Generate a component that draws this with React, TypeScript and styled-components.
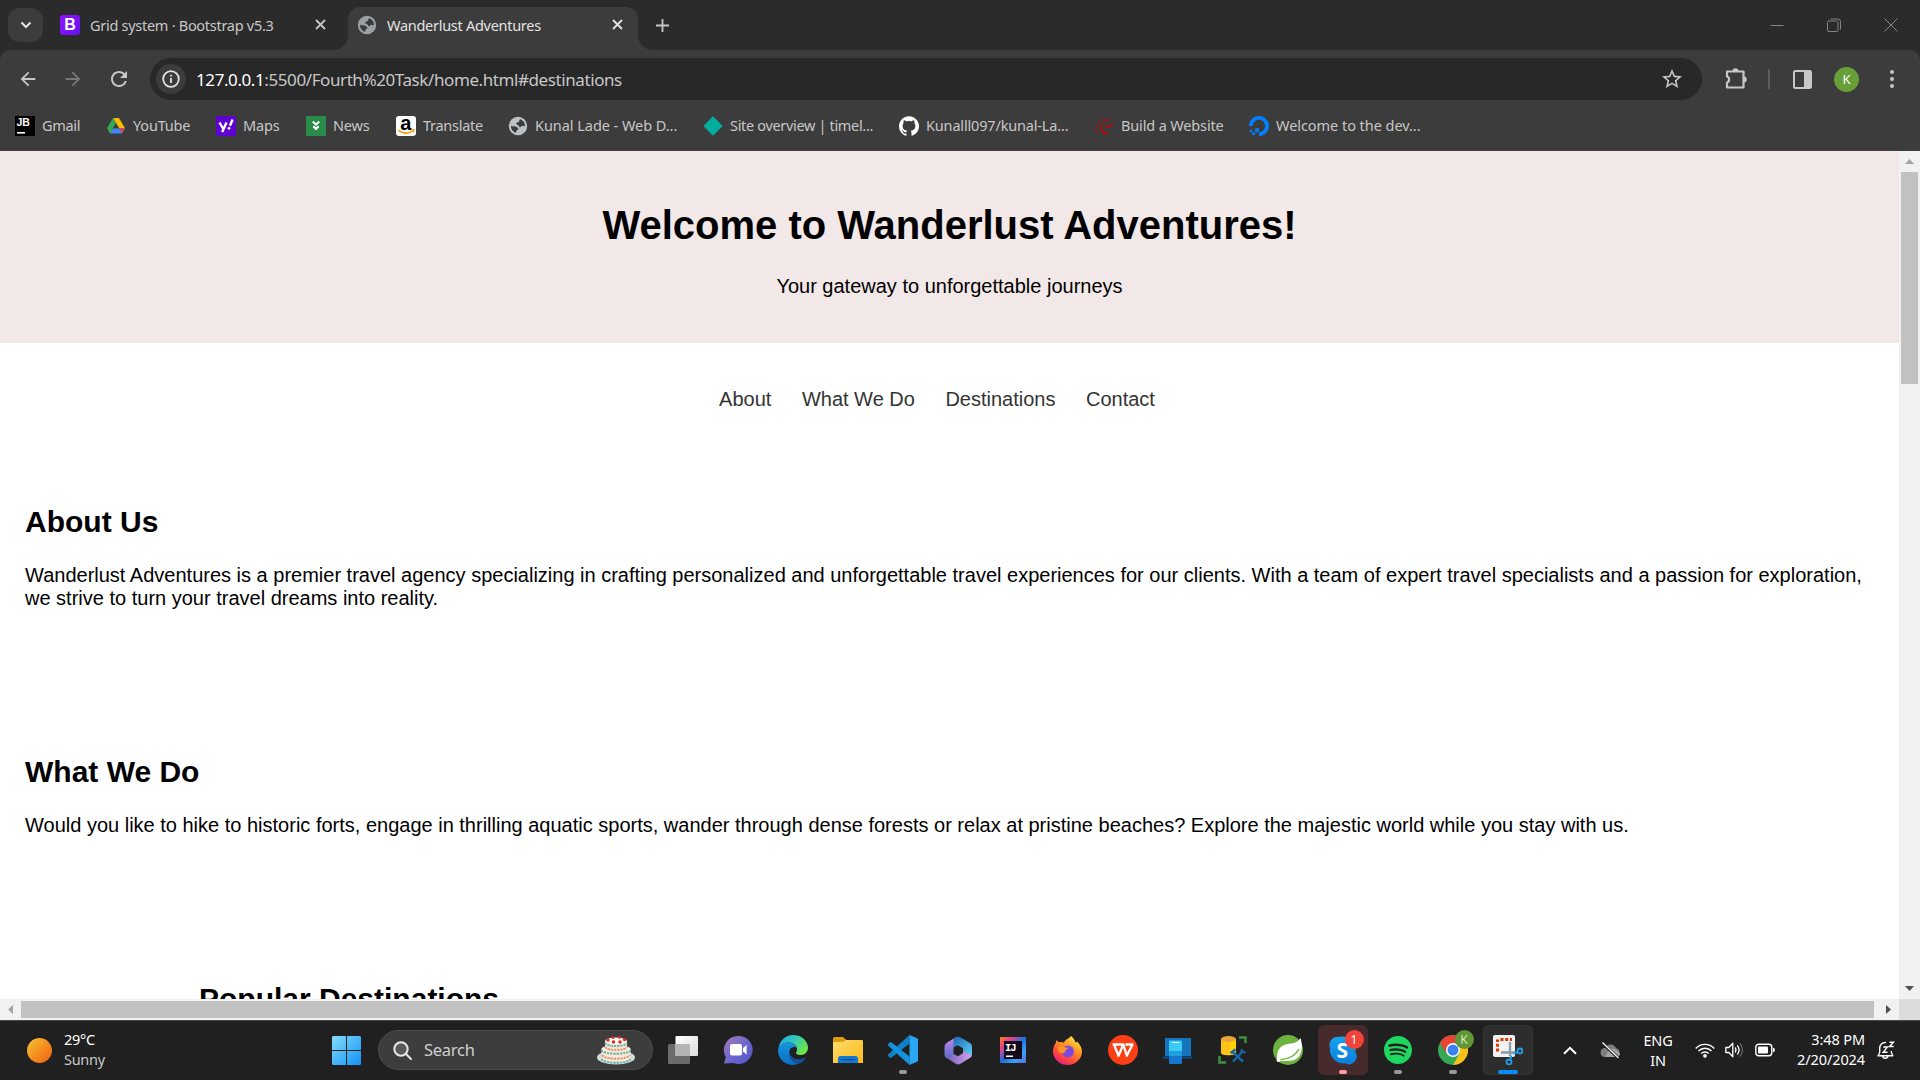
import React from "react";
import styled, { createGlobalStyle } from "styled-components";
import { MdRefresh, MdStarBorder, MdArrowBack, MdArrowForward } from "react-icons/md";
import { SiGithub, SiSpotify, SiDigitalocean } from "react-icons/si";

const ui = `"Noto Sans", "Open Sans", sans-serif`;
const arial = `"Liberation Sans", Arial, sans-serif`;

const Global = createGlobalStyle`
  * { box-sizing: border-box; }
  body { margin: 0; background: #202020; overflow: hidden; }
  svg { display: block; flex: none; }
`;

const Screen = styled.div`
  width: 1920px;
  height: 1080px;
  display: flex;
  flex-direction: column;
  overflow: hidden;
  font-family: ${ui};
`;

/* ---------- browser chrome ---------- */
const TabStrip = styled.div`
  height: 50px;
  flex: none;
  display: flex;
  align-items: flex-end;
  background: #2b2b2b;
  padding-left: 8px;
`;
const TabSearch = styled.div`
  width: 35px;
  height: 34px;
  margin-bottom: 8px;
  border-radius: 12px;
  background: #3c3c3c;
  display: grid;
  place-items: center;
`;
const Tab = styled.div<{ $active?: boolean; $w: number }>`
  position: relative;
  width: ${p => p.$w}px;
  height: ${p => (p.$active ? 43 : 42)}px;
  display: flex;
  align-items: center;
  padding: ${p => (p.$active ? "0 15px 0 9px" : "0 22px 0 17px")};
  border-radius: 12px 12px 0 0;
  background: ${p => (p.$active ? "#3c3c3c" : "transparent")};
  color: ${p => (p.$active ? "#e3e3e3" : "#c7c7c7")};
  padding-bottom: ${p => (p.$active ? 8 : 9)}px;
  &::before, &::after {
    content: ${p => (p.$active ? '""' : "none")};
    position: absolute;
    bottom: 0;
    width: 14px;
    height: 14px;
  }
  &::before { left: -14px; background: radial-gradient(circle at 0 0, transparent 13.5px, #3c3c3c 14px); }
  &::after { right: -14px; background: radial-gradient(circle at 100% 0, transparent 13.5px, #3c3c3c 14px); }
`;
const TabTitle = styled.span`
  font-size: 14.5px;
  letter-spacing: -0.28px;
  line-height: 20px;
  margin-left: 10px;
  flex: 1;
  white-space: nowrap;
`;
const BootstrapBadge = styled.span`
  width: 20px;
  height: 20px;
  border-radius: 3px;
  background: linear-gradient(135deg, #9013fe, #6610f2);
  color: #fff;
  font: 700 16px/20px ${arial};
  text-align: center;
`;
const NewTab = styled.div`
  margin: 0 0 17px 17px;
`;
const WindowButtons = styled.div`
  margin-left: auto;
  padding: 0 22px 18px 0;
  display: flex;
  gap: 43px;
`;
const Toolbar = styled.div`
  height: 101px;
  flex: none;
  background: #2b2b2b;
`;
const ToolbarFace = styled.div`
  height: 100%;
  background: #3c3c3c;
  border-radius: 10px 10px 0 0;
  border-bottom: 1px solid #434040;
`;
const AddressRow = styled.div`
  display: flex;
  align-items: center;
  height: 58px;
  padding: 0 22px 0 17px;
  color: #c7c7c7;
`;
const NavIcons = styled.div`
  display: flex;
  gap: 23px;
  width: 133px;
  align-items: center;
`;
const Omnibox = styled.div`
  width: 1552px;
  height: 42px;
  border-radius: 21px;
  background: #282828;
  display: flex;
  align-items: center;
  padding: 0 18px 0 6px;
`;
const InfoChip = styled.span`
  width: 30px;
  height: 30px;
  border-radius: 50%;
  background: #3c3c3c;
  display: grid;
  place-items: center;
`;
const Url = styled.span`
  flex: 1;
  margin-left: 10px;
  font-size: 17px;
  letter-spacing: -0.41px;
  color: #c7c7c7;
  b { font-weight: 400; color: #fff; }
`;
const Actions = styled.div`
  display: flex;
  align-items: center;
  margin-left: 22px;
  flex: 1;
`;
const Divider = styled.i`
  width: 2px;
  height: 20px;
  background: #5c5c5c;
  margin: 0 23px 0 20px;
`;
const Avatar = styled.span`
  width: 25px;
  height: 25px;
  border-radius: 50%;
  background: #689f38;
  color: #fff;
  font-size: 13px;
  line-height: 25px;
  text-align: center;
  margin: 0 31px 0 22px;
`;
const BookmarkRow = styled.div`
  display: flex;
  gap: 26px;
  height: 36px;
  align-items: center;
  padding-left: 15px;
`;
const Bookmark = styled.div`
  display: flex;
  align-items: center;
  gap: 7px;
  color: #c7c7c7;
`;
const BookmarkLabel = styled.span<{ $w: number; $ls: number }>`
  width: ${p => p.$w}px;
  font-size: 14.5px;
  line-height: 20px;
  padding-bottom: 2px;
  letter-spacing: ${p => p.$ls}px;
  white-space: nowrap;
`;
const IconSlot = styled.span<{ $bg?: string; $r?: number; $fg?: string }>`
  width: 20px;
  height: 20px;
  flex: none;
  display: grid;
  place-items: center;
  border-radius: ${p => p.$r ?? 0}px;
  background: ${p => p.$bg ?? "transparent"};
  color: ${p => p.$fg ?? "#c7c7c7"};
`;

/* ---------- web page ---------- */
const Viewport = styled.div`
  display: grid;
  grid-template-columns: 1899px 21px;
  grid-template-rows: 848px 21px;
  flex: none;
`;
const Page = styled.main`
  background: #fff;
  overflow: hidden;
  font-family: ${arial};
  font-size: 20px;
  line-height: 23px;
  color: #000;
`;
const Hero = styled.header`
  height: 192px;
  background: #f1e8e7;
  padding: 51px 0 0;
  text-align: center;
`;
const H1 = styled.h1`
  margin: 0;
  font-size: 40px;
  line-height: 46px;
`;
const P = styled.p`
  margin: 0;
`;
const HeroText = styled(P)`
  margin-top: 27px;
`;
const PageNav = styled.nav`
  height: 112px;
  padding: 1px 25px 0 0;
  display: flex;
  justify-content: center;
  align-items: center;
  gap: 30.5px;
  a { color: #333; }
`;
const Section = styled.section<{ $h: number; $left?: number }>`
  height: ${p => p.$h}px;
  padding: 50px 25px 0 ${p => p.$left ?? 25}px;
`;
const H2 = styled.h2`
  margin: 0 0 25px;
  font-size: 30px;
  line-height: 34px;
`;
const VScroll = styled.div`
  background: #f1f1f1;
  display: flex;
  flex-direction: column;
  align-items: center;
`;
const VThumb = styled.div`
  width: 17px;
  height: 212px;
  background: #c1c1c1;
`;
const HScroll = styled.div`
  background: #f1f1f1;
  display: flex;
  align-items: center;
`;
const HThumb = styled.div`
  height: 17px;
  width: 1853px;
  background: #c1c1c1;
`;
const Arrow = styled.div`
  width: 21px;
  height: 21px;
  flex: none;
  display: grid;
  place-items: center;
  &:last-child { margin: auto 0 0 auto; }
  ${HScroll} &:last-child { margin: 0 0 0 auto; }
`;
const Corner = styled.div`
  background: #dcdcdc;
`;

/* ---------- taskbar ---------- */
const Taskbar = styled.footer`
  height: 60px;
  flex: none;
  background: #202020;
  border-top: 1px solid #4a4a4a;
  display: flex;
  align-items: center;
  color: #fff;
  font-size: 14.5px;
  line-height: 20px;
  padding-bottom: 1px;
`;
const Weather = styled.div`
  width: 332px;
  padding-left: 27px;
  display: flex;
  align-items: center;
  gap: 12px;
  letter-spacing: -0.3px;
  div { padding-bottom: 3px; }
  span { color: #c9c9c9; }
`;
const Sun = styled.i`
  width: 25px;
  height: 25px;
  border-radius: 50%;
  background: linear-gradient(135deg, #f3c13a 5%, #f58a1c 55%, #ee5f12);
`;
const SearchBox = styled.div`
  width: 275px;
  height: 40px;
  margin: 0 2px 0 17px;
  border-radius: 20px;
  border: 1px solid #4c4c4c;
  background: #3d3d3d;
  display: flex;
  align-items: center;
  padding: 0 17px 0 14px;
  font-size: 16.5px;
  letter-spacing: -0.25px;
  color: #cfcfcf;
  span { flex: 1; margin-left: 12px; }
`;
const AppTile = styled.div<{ $bg?: string; $line?: string }>`
  position: relative;
  width: 50px;
  height: 50px;
  margin: 0 2.5px;
  flex: none;
  border-radius: 6px;
  background: ${p => p.$bg ?? "transparent"};
  box-shadow: ${p => (p.$line ? `inset 0 0 0 1px ${p.$line}` : "none")};
  display: grid;
  place-items: center;
`;
const Indicator = styled.i<{ $w?: number; $c?: string }>`
  position: absolute;
  bottom: 1px;
  left: 50%;
  transform: translateX(-50%);
  width: ${p => p.$w ?? 8}px;
  height: 4px;
  border-radius: 2px;
  background: ${p => p.$c ?? "#9a9a9a"};
`;
const Badge = styled.b<{ $bg: string; $fg: string }>`
  position: absolute;
  top: 5px;
  right: 4px;
  width: 19px;
  height: 19px;
  border-radius: 50%;
  background: ${p => p.$bg};
  color: ${p => p.$fg};
  font-weight: 400;
  font-size: 12px;
  line-height: 19px;
  text-align: center;
`;
const Tray = styled.div`
  display: flex;
  align-items: center;
  margin-left: 28px;
`;
const Stack = styled.div<{ $w: number; $ml: number; $align: string; $ls: number; $up: number }>`
  width: ${p => p.$w}px;
  margin-left: ${p => p.$ml}px;
  padding-bottom: ${p => p.$up}px;
  display: flex;
  flex-direction: column;
  align-items: ${p => p.$align};
  white-space: nowrap;
  letter-spacing: ${p => p.$ls}px;
`;
const TrayIcon = styled.span<{ $ml: number }>`
  margin-left: ${p => p.$ml}px;
`;

const Cross = ({ c }: { c: string }) => (
  <svg width="11" height="11" viewBox="0 0 11 11"><path d="M1 1l9 9M10 1l-9 9" stroke={c} strokeWidth="1.8" /></svg>
);

const Globe = ({ c }: { c: string }) => (
  <svg width="20" height="20" viewBox="0 0 20 20">
    <circle cx="10" cy="10" r="9.2" fill={c} />
    <path d="M12.300 3.200c2.800 1 4.700 3.600 4.700 6.400-.6 1.300-1.700.2-2.900.2-1 0-.8 1.400-2 1.400-1.300 0-1-1.800-2.200-2.200-1.200-.4-2-.6-1.600-1.700.4-1 1.700-.6 2.400-1.300.8-.8.3-2.300 1.600-2.800z" fill="#3c3c3c" />
    <path d="M3 9.700c1.300.8 3.600.2 5 1 1.300.8 2.300.9 2.300 2.100 0 1.300-1.600 1-1.900 2.200l-.4 1.800C5 16 2.800 13 3 9.700z" fill="#3c3c3c" />
  </svg>
);

const bookmarks: { label: string; w: number; ls: number; icon: React.ReactNode }[] = [
  { label: "Gmail", w: 38, ls: -0.3, icon: (
    <IconSlot $bg="#000">
      <svg width="20" height="20" viewBox="0 0 20 20">
        <text x="1.5" y="9.500" fill="#fff" fontFamily="Liberation Sans" fontWeight="700" fontSize="10.500">JB</text>
        <rect x="2" y="16" width="8" height="1.6" fill="#fff" />
      </svg>
    </IconSlot>) },
  { label: "YouTube", w: 57, ls: -0.18, icon: (
    <IconSlot>
      <svg width="20" height="20" viewBox="0 0 20 20">
        <path d="M7 2h6l6 10.3h-6z" fill="#fbbc04" />
        <path d="M7 12.3h12l-3 5.2H4z" fill="#4285f4" />
        <path d="M13.3 12.3H19l-2.8 4.9z" fill="#ea4335" />
        <path d="M7 2l3 5-3 5.3-3 5.2-3-5.2z" fill="#34a853" />
        <path d="M10 7.2l3 5.1H7z" fill="#3c3c3c" />
      </svg>
    </IconSlot>) },
  { label: "Maps", w: 37, ls: -0.15, icon: (
    <IconSlot $bg="#5f01d1">
      <svg width="20" height="20" viewBox="0 0 20 20" fill="none" stroke="#fff">
        <path d="M3.500 6.500l3.500 6M10.500 6.500L6.200 16" strokeWidth="2.400" />
        <path d="M16.600 3.500l-2.600 6.300" strokeWidth="2.400" />
        <circle cx="13" cy="12.300" r="1.400" fill="#fff" stroke="none" />
      </svg>
    </IconSlot>) },
  { label: "News", w: 37, ls: -0.15, icon: (
    <IconSlot $bg="#2a8a4a">
      <svg width="20" height="20" viewBox="0 0 20 20" fill="none" stroke="#fff" strokeWidth="2">
        <path d="M6.800 5.500L10 8.600l3.200-3.100" /><path d="M7.300 10.200l2.700 2.600 2.700-2.600" /><circle cx="10" cy="12.700" r="1.300" fill="#fff" stroke="none" />
      </svg>
    </IconSlot>) },
  { label: "Translate", w: 59, ls: -0.27, icon: (
    <IconSlot $bg="#fff" $r={3}>
      <svg width="20" height="20" viewBox="0 0 20 20">
        <text x="4.200" y="13.500" fontFamily="Liberation Sans" fontWeight="700" fontSize="20" fill="#000">a</text>
        <path d="M2.500 14.300c4.500 3.800 10.500 3.600 14 .7" fill="none" stroke="#f90" strokeWidth="1.600" />
        <path d="M15.200 14.200l2.700-.4-.6 2.700" fill="none" stroke="#f90" strokeWidth="1.200" />
      </svg>
    </IconSlot>) },
  { label: "Kunal Lade - Web D...", w: 142, ls: -0.05, icon: <IconSlot><Globe c="#bdc1c6" /></IconSlot> },
  { label: "Site overview | timel...", w: 143, ls: -0.33, icon: (
    <IconSlot><svg width="20" height="20" viewBox="0 0 20 20"><path d="M10 .3L19.700 10 10 19.700.3 10z" fill="#00ad9f" /></svg></IconSlot>) },
  { label: "Kunalll097/kunal-La...", w: 142, ls: -0.17, icon: <IconSlot $fg="#fff"><SiGithub size={20} /></IconSlot> },
  { label: "Build a Website", w: 102, ls: -0.15, icon: (
    <IconSlot>
      <svg width="20" height="20" viewBox="0 0 20 20" fill="none" stroke="#b80d0d">
        <path d="M2.500 17C.5 12 3 9 6.500 7.500" strokeWidth="1" /><path d="M4 7C7 3 11 2 13 3" strokeWidth="1" strokeDasharray="3 1" />
        <path d="M9 6c3-2.500 6-1 8.500-3" strokeWidth=".9" />
        <path d="M9 8.500c3 2.500 7 2.500 10-1.500-1 5-6 6-10 1.500z" fill="#d50000" strokeWidth=".5" />
        <path d="M7.800 8.500c-1.300 4 .5 8 6.200 9-5 2.500-9-3-6.200-9z" fill="#d50000" strokeWidth=".8" />
      </svg>
    </IconSlot>) },
  { label: "Welcome to the dev...", w: 144, ls: -0.05, icon: <IconSlot $fg="#0080ff"><SiDigitalocean size={20} /></IconSlot> },
];

const EdgeIcon = () => (
  <svg width="30" height="30" viewBox="0 0 30 30">
    <defs>
      <linearGradient id="e1" x1="0" y1="0" x2="1" y2=".5"><stop offset="0" stopColor="#22a7e0" /><stop offset=".5" stopColor="#2fc5c4" /><stop offset="1" stopColor="#6be547" /></linearGradient>
      <linearGradient id="e2" x1="0" y1="0" x2="0" y2="1"><stop offset="0" stopColor="#1795dc" /><stop offset="1" stopColor="#0a6cc4" /></linearGradient>
    </defs>
    <path d="M.5 13C2 5 8 0 15 0c9 0 15 6.500 15 12.500 0 5-3.600 7.500-7.500 7.500-3.500 0-5-1.500-4.500-2.500.8-1 1.300-1.800 1-3.800C18.500 10 15 7.500 10.500 7.500 6 7.500 2.500 9.500.5 13z" fill="url(#e1)" />
    <path d="M0 15.500C0 10 5 7.500 10 7.500c4.500 0 8 2.400 8.900 5.500-1.500-1.500-6.500-1.500-7.400 3C10.500 22 15 27.500 21 28.300 19 29.600 17 30 15 30 6.500 30 0 23.500 0 15.500z" fill="url(#e2)" />
    <path d="M13 12.500c-2 2-2 6 .5 8.800 3.500 3.700 9.500 3.500 13.500 1.200.6-.3 1 .1.700.6C26 26 23 29 20 28.800 13 27.500 8 20 13 12.500z" fill="#14509c" />
  </svg>
);

const Apps = () => (
  <>
    <AppTile>
      <svg width="30" height="28" viewBox="0 0 30 28">
        <defs><linearGradient id="tv" x1="0" y1="0" x2="1" y2="1"><stop offset="0" stopColor="#fff" /><stop offset="1" stopColor="#dcdcdc" /></linearGradient></defs>
        <rect x="0" y="8" width="22" height="20" rx="1.500" fill="#6b6b6b" /><rect x="7.500" y="0" width="22.500" height="20" rx="1" fill="url(#tv)" /><path d="M7.500 8H22v12H7.500z" fill="#b4b4b4" />
      </svg>
    </AppTile>
    <AppTile>
      <svg width="30" height="30" viewBox="0 0 30 30">
        <defs><linearGradient id="ch" x1="0" y1="0" x2="1" y2="1"><stop offset="0" stopColor="#a379b3" /><stop offset=".55" stopColor="#6a66d0" /><stop offset="1" stopColor="#4f52c4" /></linearGradient></defs>
        <path d="M15 1a14 14 0 1 1-4.500 27L1 28.500 2.800 22A14 14 0 0 1 15 1z" fill="url(#ch)" />
        <rect x="7" y="9" width="12" height="11.500" rx="2" fill="#fff" /><path d="M20 13l3.600-3v9.500L20 16.500z" fill="#fff" />
      </svg>
    </AppTile>
    <AppTile><EdgeIcon /></AppTile>
    <AppTile>
      <svg width="30" height="26" viewBox="0 0 30 26">
        <defs><linearGradient id="fo" x1="0" y1="0" x2="1" y2="1"><stop offset="0" stopColor="#ffdc69" /><stop offset="1" stopColor="#fbb81b" /></linearGradient></defs>
        <path d="M0 1.500Q0 0 1.500 0H10l3.500 3H28q2 0 2 2v6H0z" fill="#dc9c0c" />
        <path d="M0 5h10l3-2h15.500Q30 3 30 4.500V26H0z" fill="url(#fo)" />
        <path d="M5 26v-4.500Q5 19 7.500 19h15q2.500 0 2.500 2.500V26z" fill="#1278cf" /><rect x="8" y="22" width="14" height="1.200" fill="#0b4f94" />
      </svg>
    </AppTile>
    <AppTile>
      <svg width="30" height="30" viewBox="0 0 30 30">
        <path d="M21.500 0v8.500L3.700 22.500Q2.500 23.200 1.500 22.300L.4 21.200Q-.4 20 .6 19z" fill="#0f80c9" />
        <path d="M21.500 30v-8.500L3.700 7.600Q2.500 6.800 1.500 7.700L.4 8.800Q-.4 10 .6 11z" fill="#1592df" />
        <path d="M21.500 0L30 3.800v22.500L21.500 30z" fill="#2aa7f2" />
      </svg>
      <Indicator />
    </AppTile>
    <AppTile>
      <svg width="28" height="29" viewBox="0 0 28 29">
        <defs>
          <linearGradient id="m1" x1="0" y1="0" x2="0" y2="1"><stop offset="0" stopColor="#c28ee8" /><stop offset="1" stopColor="#5c69c9" /></linearGradient>
          <linearGradient id="m2" x1="0" y1="0" x2="1" y2="1"><stop offset="0" stopColor="#1e63b8" /><stop offset="1" stopColor="#5cd2f5" /></linearGradient>
          <linearGradient id="m3" x1="0" y1="0" x2="1" y2="0"><stop offset="0" stopColor="#7d62bd" /><stop offset="1" stopColor="#d2a4f0" /></linearGradient>
        </defs>
        <path d="M12.500 1L3 6.500Q.5 8 .5 10.500v8Q.5 21.500 3.500 22.500L9.500 19v-8z" fill="url(#m1)" />
        <path d="M11.500 1.200Q14 0 16.500 1.500L26 7q2 1.300 2 3.500v9L19 16v-4l-5.500-2.800L9.500 11.500V5q0-2.500 2-3.800z" fill="url(#m2)" />
        <path d="M3.500 22.500L9.500 18l4.500 2.200 5-3.200v-2l9 4.500q-.5 1.800-2.200 2.500l-9.300 5.800q-2.300 1.300-4.700 0z" fill="url(#m3)" />
      </svg>
    </AppTile>
    <AppTile>
      <svg width="26" height="26" viewBox="0 0 26 26">
        <defs><linearGradient id="ij" x1="0" y1="0" x2="1" y2="1"><stop offset="0" stopColor="#fc801d" /><stop offset=".25" stopColor="#e6408c" /><stop offset=".5" stopColor="#1a6fe0" /><stop offset=".75" stopColor="#3da0f5" /><stop offset="1" stopColor="#5a6be0" /></linearGradient></defs>
        <rect width="26" height="26" fill="url(#ij)" /><path d="M4 4h18v18H4z" fill="#120817" />
        <text x="5" y="13.500" fontFamily="Liberation Mono" fontWeight="700" fontSize="10.500" letterSpacing="-1" fill="#fff">IJ</text><rect x="6" y="18.500" width="7" height="1.500" fill="#fff" />
      </svg>
    </AppTile>
    <AppTile>
      <svg width="29" height="29" viewBox="0 0 29 29">
        <defs><linearGradient id="ff" x1=".8" y1="0" x2=".2" y2="1"><stop offset="0" stopColor="#fff14a" /><stop offset=".35" stopColor="#ff9a25" /><stop offset=".7" stopColor="#ff4a3c" /><stop offset="1" stopColor="#e31587" /></linearGradient></defs>
        <path d="M18 0c2.500 2 4 4.500 4.200 6.200 1-.2 1.300.1 1.800-.8 3 3 5 6.500 5 10.100C29 23 22.500 29 14.500 29S0 23 0 15.500c0-3.500 1-6.500 3-9V4.200c1 .3 2 1 3 2 1.800-.5 3.400-.3 5 .3C13 2.500 15.500 3.500 18 0z" fill="url(#ff)" />
        <circle cx="15" cy="15.500" r="6" fill="#7a4ae0" /><path d="M5 11c3-1.500 5-1 7 .5 1.500 0 3 .3 3.500 1-1.500 1-3 1-3.200 2.500.2 1.500-2 2-3 2.500C6 17.500 4.500 14 5 11z" fill="#ff9422" />
      </svg>
    </AppTile>
    <AppTile>
      <svg width="30" height="30" viewBox="0 0 30 30">
        <circle cx="15" cy="15" r="15" fill="#fd3f15" />
        <path d="M5.500 9.500h9M6 9.500l4.500 11.200 4.800-11.200 3.500 11.200L24.500 9.500h-6.300" fill="none" stroke="#fff" strokeWidth="2.300" strokeLinejoin="round" strokeLinecap="round" />
      </svg>
    </AppTile>
    <AppTile>
      <svg width="30" height="27" viewBox="0 0 30 27">
        <path d="M2 1h26v18H2z" fill="#1575bd" /><path d="M0 19.500h30l-1.500 2H0z" fill="#0a4f8f" />
        <rect x="6" y="3.500" width="13" height="23.500" rx="1" fill="#1476cc" /><path d="M6 4.500q0-1 1-1h11q1 0 1 1V14H6z" fill="#3ccbf4" /><path d="M6 14h13v5H6z" fill="#209fdf" /><rect x="9" y="5" width="7" height="1" fill="#e8faff" />
      </svg>
    </AppTile>
    <AppTile>
      <svg width="30" height="30" viewBox="0 0 30 30" fill="none">
        <path d="M3 4v14c0 3 15 3 15 0V4z" fill="#fcc419" /><path d="M12 4v16c4 0 6-1 6-2V4z" fill="#ffd500" /><ellipse cx="10.500" cy="4" rx="7.500" ry="3" fill="#e8a33d" />
        <path d="M21 2.500h6.500V8M1.500 21v6.500H8" stroke="#3f9142" strokeWidth="2.500" />
        <path d="M15 26.500L25 16M14 16.500l11 10" stroke="#1565a8" strokeWidth="2.400" /><path d="M12.500 18l5-3.500M24 14c-1 2-.3 3.700 3.500 3" stroke="#1565a8" strokeWidth="2.400" />
      </svg>
    </AppTile>
    <AppTile>
      <svg width="30" height="30" viewBox="0 0 30 30">
        <circle cx="15" cy="15" r="15" fill="#6db33f" />
        <path d="M27.500 3c2.500 8 1.500 15-2 19-4 4.500-11 4-17.500 4-2 0-4.500-2-3.800-6C5 11 12 9 18 8.500c4-.4 7.500-2 9.500-5.500z" fill="#fff" />
        <path d="M7 24.800c8-.5 15-3.500 19-10.800" fill="none" stroke="#6db33f" strokeWidth="1.500" /><circle cx="5.500" cy="25" r="2" fill="#fff" />
      </svg>
    </AppTile>
    <AppTile $bg="#472a2b">
      <svg width="30" height="30" viewBox="0 0 30 30">
        <defs><linearGradient id="sk" x1="0" y1="0" x2="0" y2="1"><stop offset="0" stopColor="#16a3ec" /><stop offset="1" stopColor="#0a7fdc" /></linearGradient></defs>
        <path d="M9 2a12 12 0 0 1 3-.3A13.500 13.500 0 0 1 27.500 17 8 8 0 0 1 17 28.300 13.500 13.500 0 0 1 2 13 8 8 0 0 1 9 2z" fill="url(#sk)" />
        <text x="8.600" y="22.500" fontFamily="Noto Sans" fontWeight="700" fontSize="21" fill="#fff">S</text>
      </svg>
      <Badge $bg="#f04438" $fg="#fff">1</Badge>
      <Indicator $c="#ff9da4" />
    </AppTile>
    <AppTile><SiSpotify size={28} color="#1ed760" /><Indicator /></AppTile>
    <AppTile>
      <svg width="30" height="30" viewBox="0 0 30 30">
        <circle cx="15" cy="15" r="15" fill="#34a853" />
        <path d="M28 7.500A15 15 0 0 1 15 30l6.500-11.200L19 7.500z" fill="#fbc116" />
        <path d="M2 7.500l6.500 11.300L15 8h13A15 15 0 0 0 2 7.500z" fill="#ea4335" />
        <circle cx="15" cy="15" r="7" fill="#fff" /><circle cx="15" cy="15" r="5.500" fill="#3b82f0" />
      </svg>
      <Badge $bg="#5f9636" $fg="#cfe5bd">K</Badge>
      <Indicator />
    </AppTile>
    <AppTile $bg="#2d2d2d" $line="#373737">
      <svg width="30" height="30" viewBox="0 0 30 30" fill="none">
        <rect x="0" y="0" width="22" height="22" rx="2" fill="#f1f1f1" />
        <path d="M4.500 16.500V4.500" stroke="#d83b01" strokeWidth="3" strokeDasharray="3 1.700" /><path d="M7.500 4.500H19" stroke="#d83b01" strokeWidth="3" strokeDasharray="3 1.700" />
        <path d="M8 17.500h14M17 7v14" stroke="#8c9aa5" strokeWidth="2.300" />
        <circle cx="27" cy="16" r="2.500" stroke="#1e9fe8" strokeWidth="1.800" /><circle cx="16" cy="27" r="2.500" stroke="#1e9fe8" strokeWidth="1.800" /><path d="M20 18.500l5-1.500M18.500 20.500L17 25" stroke="#1e9fe8" strokeWidth="2" />
      </svg>
      <Indicator $w={20} $c="#0a8cff" />
    </AppTile>
  </>
);

const Cake = () => (
  <svg width="38" height="30" viewBox="0 0 38 30">
    <ellipse cx="19" cy="22.500" rx="19" ry="7" fill="#d5d8dc" />
    <path d="M4.500 14v9c0 6 29 6 29 0v-9z" fill="#f6e6d2" /><ellipse cx="19" cy="14" rx="14.500" ry="4" fill="#fbf3e6" />
    <path d="M8 6v9c0 4 22 4 22 0V6z" fill="#f6e3cf" /><ellipse cx="19" cy="6" rx="11" ry="3.500" fill="#fff5ea" />
    <g fill="none" strokeDasharray="2.200 1">
      <path d="M8 8c2 4 20 4 22 0M4.500 15c2 5 27 5 29 0" stroke="#53b8ac" strokeWidth="1.800" />
      <path d="M8 12c3 4 19 4 22 0M5 20c3 5 25 5 28 0" stroke="#e8836e" strokeWidth="1.600" />
      <path d="M4.500 24c3 5 26 5 29 0" stroke="#53b8ac" strokeWidth="1.800" />
    </g>
    <g fill="#cf2f2b"><circle cx="11" cy="5" r="1.700" /><circle cx="16.500" cy="7" r="1.700" /><circle cx="23" cy="7" r="1.700" /><circle cx="27.500" cy="4.500" r="1.700" /><circle cx="16" cy="2.500" r="1.500" /><circle cx="22.500" cy="2.200" r="1.500" /></g>
  </svg>
);

const Tri = ({ d, c }: { d: string; c: string }) => (
  <svg width="9" height="9" viewBox="0 0 9 9"><path d={d} fill={c} /></svg>
);

export default function App() {
  return (
    <Screen>
      <Global />
      <TabStrip>
        <TabSearch>
          <svg width="12" height="8" viewBox="0 0 12 8"><path d="M1.500 1.500L6 6l4.500-4.500" fill="none" stroke="#e3e3e3" strokeWidth="2" /></svg>
        </TabSearch>
        <Tab $w={305}>
          <BootstrapBadge>B</BootstrapBadge>
          <TabTitle>Grid system · Bootstrap v5.3</TabTitle>
          <Cross c="#c7c7c7" />
        </Tab>
        <Tab $active $w={290}>
          <IconSlot><Globe c="#9aa0a6" /></IconSlot>
          <TabTitle>Wanderlust Adventures</TabTitle>
          <Cross c="#e3e3e3" />
        </Tab>
        <NewTab>
          <svg width="15" height="15" viewBox="0 0 15 15"><path d="M7.500 1v13M1 7.500h13" stroke="#c7c7c7" strokeWidth="1.800" /></svg>
        </NewTab>
        <WindowButtons>
          <svg width="14" height="14" viewBox="0 0 14 14"><path d="M.5 7.500h13" stroke="#858585" /></svg>
          <svg width="14" height="14" viewBox="0 0 14 14" fill="none" stroke="#858585"><rect x=".5" y="3" width="10.500" height="10.500" rx="1.500" /><path d="M3.500 1H11q2.500 0 2.500 2.500v8" /></svg>
          <svg width="14" height="14" viewBox="0 0 14 14"><path d="M.5.5l13 13M13.500.5l-13 13" stroke="#858585" /></svg>
        </WindowButtons>
      </TabStrip>

      <Toolbar>
        <ToolbarFace>
          <AddressRow>
            <NavIcons>
              <MdArrowBack size={22} />
              <MdArrowForward size={22} color="#777" />
              <MdRefresh size={24} />
            </NavIcons>
            <Omnibox>
              <InfoChip>
                <svg width="18" height="18" viewBox="0 0 18 18" fill="none" stroke="#e3e3e3" strokeWidth="1.800"><circle cx="9" cy="9" r="7.800" /><path d="M9 8v5M9 4.800v1.800" /></svg>
              </InfoChip>
              <Url><b>127.0.0.1</b>:5500/Fourth%20Task/home.html#destinations</Url>
              <MdStarBorder size={24} />
            </Omnibox>
            <Actions>
              <svg width="24" height="24" viewBox="0 0 24 24" fill="none" stroke="#c7c7c7" strokeWidth="2.200" strokeLinejoin="round">
                <path d="M3 4.500h16.500v16H3v-5c2.800-.5 2.800-5.500 0-6z" /><path d="M8.500 4a3 2.700 0 0 1 6 0zM20 9.500a2.700 3 0 0 1 0 6z" fill="#c7c7c7" stroke="none" />
              </svg>
              <Divider />
              <svg width="19" height="19" viewBox="0 0 19 19"><rect x="1" y="1" width="17" height="17" rx="1.500" fill="none" stroke="#c7c7c7" strokeWidth="2" /><path d="M11 1h7v17h-7z" fill="#c7c7c7" /></svg>
              <Avatar>K</Avatar>
              <svg width="4" height="20" viewBox="0 0 4 20" fill="#c7c7c7"><circle cx="2" cy="3" r="2" /><circle cx="2" cy="10" r="2" /><circle cx="2" cy="17" r="2" /></svg>
            </Actions>
          </AddressRow>
          <BookmarkRow>
            {bookmarks.map(b => (
              <Bookmark key={b.label}>
                {b.icon}
                <BookmarkLabel $w={b.w} $ls={b.ls}>{b.label}</BookmarkLabel>
              </Bookmark>
            ))}
          </BookmarkRow>
        </ToolbarFace>
      </Toolbar>

      <Viewport>
        <Page>
          <Hero>
            <H1>Welcome to Wanderlust Adventures!</H1>
            <HeroText>Your gateway to unforgettable journeys</HeroText>
          </Hero>
          <PageNav>
            <a>About</a><a>What We Do</a><a>Destinations</a><a>Contact</a>
          </PageNav>
          <Section $h={250}>
            <H2>About Us</H2>
            <P>Wanderlust Adventures is a premier travel agency specializing in crafting personalized and unforgettable travel experiences for our clients. With a team of expert travel specialists and a passion for exploration, we strive to turn your travel dreams into reality.</P>
          </Section>
          <Section $h={227}>
            <H2>What We Do</H2>
            <P>Would you like to hike to historic forts, engage in thrilling aquatic sports, wander through dense forests or relax at pristine beaches? Explore the majestic world while you stay with us.</P>
          </Section>
          <Section $h={227} $left={199}>
            <H2>Popular Destinations</H2>
          </Section>
        </Page>
        <VScroll>
          <Arrow><Tri d="M0 7l4.500-5L9 7z" c="#a3a3a3" /></Arrow>
          <VThumb />
          <Arrow><Tri d="M0 2l4.500 5L9 2z" c="#505050" /></Arrow>
        </VScroll>
        <HScroll>
          <Arrow><Tri d="M7 0L2 4.500 7 9z" c="#a3a3a3" /></Arrow>
          <HThumb />
          <Arrow><Tri d="M2 0l5 4.500L2 9z" c="#505050" /></Arrow>
        </HScroll>
        <Corner />
      </Viewport>

      <Taskbar>
        <Weather>
          <Sun />
          <div>29°C<br /><span>Sunny</span></div>
        </Weather>
        <svg width="29" height="29" viewBox="0 0 29 29">
          <defs><linearGradient id="win" gradientUnits="userSpaceOnUse" x1="0" y1="0" x2="29" y2="29"><stop offset="0" stopColor="#86dcfb" /><stop offset="1" stopColor="#0f92f5" /></linearGradient></defs>
          <path d="M1 0h13v14H0V1zM15 0h13l1 1v13H15zM0 15h14v14H1l-1-1zM15 15h14v13l-1 1H15z" fill="url(#win)" />
        </svg>
        <SearchBox>
          <svg width="19" height="19" viewBox="0 0 19 19" fill="none" stroke="#e8e8e8" strokeWidth="2"><circle cx="8" cy="8" r="6.700" fill="#5a5a5a" /><path d="M12.800 12.800l5.200 5.200" strokeLinecap="round" /></svg>
          <span>Search</span>
          <Cake />
        </SearchBox>
        <Apps />
        <Tray>
          <svg width="14" height="9" viewBox="0 0 14 9"><path d="M1 7.800l6-6 6 6" fill="none" stroke="#fff" strokeWidth="2" /></svg>
          <TrayIcon $ml={23}>
            <svg width="20" height="17" viewBox="0 0 20 17"><path d="M5 15a4.500 4.500 0 0 1 0-9 6 6 0 0 1 11 0 4.600 4.600 0 0 1-.5 9z" fill="#7d7d7d" /><path d="M5 15l4-7c4-3 8 0 10 2 2 3 0 5-3 5z" fill="#a2a2a2" /><path d="M2 1l16.500 15" stroke="#202020" strokeWidth="3" /><path d="M2.500.5l16 15.500" stroke="#fff" strokeWidth="1.200" /></svg>
          </TrayIcon>
          <Stack $w={30} $ml={23} $align="center" $ls={-0.25} $up={1}><span>ENG</span><span>IN</span></Stack>
          <TrayIcon $ml={22}>
            <svg width="20" height="16" viewBox="0 0 20 16" fill="none" stroke="#fff" strokeWidth="1.400"><path d="M.7 6.500a12.500 12.500 0 0 1 18.600 0M3.500 9a9 9 0 0 1 13 0M6.200 11.500a5.500 5.500 0 0 1 7.600 0" /><circle cx="10" cy="13.800" r="1.900" fill="#fff" stroke="none" /></svg>
          </TrayIcon>
          <TrayIcon $ml={10}>
            <svg width="20" height="16" viewBox="0 0 20 16" fill="none" stroke="#fff" strokeWidth="1.300" strokeLinejoin="round"><path d="M.8 5.500h3l4-4.200v13.400l-4-4.200h-3z" /><path d="M10 5.500q2 2.500 0 5M12.300 3.500q3.700 4.500 0 9" /><path d="M15 1.500q5 6.500 0 13" stroke="#666" /></svg>
          </TrayIcon>
          <TrayIcon $ml={10}>
            <svg width="20" height="14" viewBox="0 0 20 14"><rect x=".8" y="1.200" width="16" height="11.600" rx="3" fill="none" stroke="#fff" strokeWidth="1.400" /><rect x="3" y="3.400" width="10" height="7.200" rx="1" fill="#fff" /><path d="M18 4.800q2 .3 2 2.200t-2 2.200z" fill="#fff" /></svg>
          </TrayIcon>
          <Stack $w={75} $ml={15} $align="flex-end" $ls={-0.1} $up={3}><span>3:48 PM</span><span>2/20/2024</span></Stack>
          <TrayIcon $ml={12}>
            <svg width="18" height="19" viewBox="0 0 18 19" fill="none" stroke="#fff" strokeWidth="1.400"><path d="M9 1.500C5 1.200 2.700 4 2.700 7.500v4L1 14.800h14.800l-1.500-3.300V10M5.500 15c.5 3 5 3 5.500 0" strokeLinejoin="round" /><path d="M6.300 6h4L6.300 11.200h4.200M12.500 1.200h4l-4 4.300h4.200" /></svg>
          </TrayIcon>
        </Tray>
      </Taskbar>
    </Screen>
  );
}
